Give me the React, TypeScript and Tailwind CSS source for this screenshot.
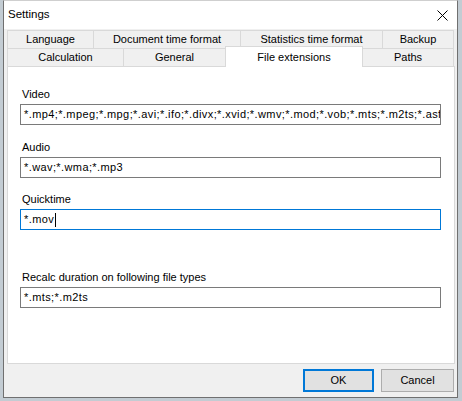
import React from "react"

const topTabs = [
    { label: "Language", w: "w-[86px]" },
    { label: "Document time format", w: "w-[147px]" },
    { label: "Statistics time format", w: "w-[142px]" },
    { label: "Backup", w: "w-[72px]" },
]

const Field = ({ label, value, focused, className }: { label: string; value: string; focused?: boolean; className?: string }) => (
    <div className={className}>
        <div className="pl-[2px] h-4 leading-4">{label}</div>
        <div
            className={`mt-[2px] h-[21px] w-[421px] bg-white border flex items-center pl-[3px] overflow-hidden whitespace-nowrap ${focused ? "border-[#0078d7]" : "border-[#7a7a7a]"}`}
        >
            <span className="tracking-[0.4px]">{value}</span>
            {focused && <span className="ml-[1px] w-px h-[14px] bg-black" />}
        </div>
    </div>
)

const App = () => {
    return (
        <div
            className="w-[462px] h-[401px] bg-[#c3ccd3] overflow-hidden text-[11px] text-black"
            style={{ fontFamily: '"Liberation Sans", Arial, sans-serif' }}
        >
            <div className="ml-[3px] w-[455px] h-[398px] border border-[#707070] border-t-[#cfcfcf] flex flex-col bg-[#f0f0f0]">
                {/* title bar */}
                <div className="h-[28px] bg-white flex items-center justify-between pl-[4px] pr-[9px]">
                    <span className="text-[11.5px]">Settings</span>
                    <svg width="11" height="11" viewBox="0 0 11 11">
                        <path d="M0.5 0.5 L10.5 10.5 M10.5 0.5 L0.5 10.5" stroke="#000" strokeWidth="1" />
                    </svg>
                </div>

                {/* tabs */}
                <div className="pl-[3px] pt-[1px]">
                    <div className="flex h-[18px]">
                        {topTabs.map((t, i) => (
                            <div
                                key={t.label}
                                className={`${t.w} h-full border-t border-l border-[#d9d9d9] flex items-center justify-center ${i === topTabs.length - 1 ? "border-r" : ""}`}
                            >
                                {t.label}
                            </div>
                        ))}
                    </div>
                    <div className="flex h-[18px] items-end">
                        <div className="w-[116px] h-full border-t border-l border-[#d9d9d9] flex items-center justify-center">Calculation</div>
                        <div className="w-[102px] h-full border-t border-l border-[#d9d9d9] flex items-center justify-center">General</div>
                        <div className="relative z-10 w-[138px] h-[21px] -mb-px bg-white border-t border-l border-r border-[#d9d9d9] flex items-start pt-[2px] justify-center">
                            File extensions
                        </div>
                        <div className="w-[91px] h-full border-t border-r border-[#d9d9d9] flex items-center justify-center">Paths</div>
                    </div>

                    {/* panel */}
                    <div className="w-[448px] h-[298px] bg-white border border-[#d9d9d9] pl-[12px] pt-[19px]">
                        <Field
                            label="Video"
                            value="*.mp4;*.mpeg;*.mpg;*.avi;*.ifo;*.divx;*.xvid;*.wmv;*.mod;*.vob;*.mts;*.m2ts;*.asf"
                        />
                        <Field label="Audio" value="*.wav;*.wma;*.mp3" className="mt-[14px]" />
                        <Field label="Quicktime" value="*.mov" focused className="mt-[13px]" />
                        <Field label="Recalc duration on following file types" value="*.mts;*.m2ts" className="mt-[39px]" />
                    </div>
                </div>

                {/* buttons */}
                <div className="flex-1 flex justify-end items-start pt-[5px] pr-[3px] gap-[7px]">
                    <button className="w-[71px] h-[23px] bg-[#e1e1e1] border-2 border-[#0078d7]">OK</button>
                    <button className="w-[73px] h-[23px] bg-[#e1e1e1] border border-[#adadad]">Cancel</button>
                </div>
            </div>
        </div>
    )
}

export default App
